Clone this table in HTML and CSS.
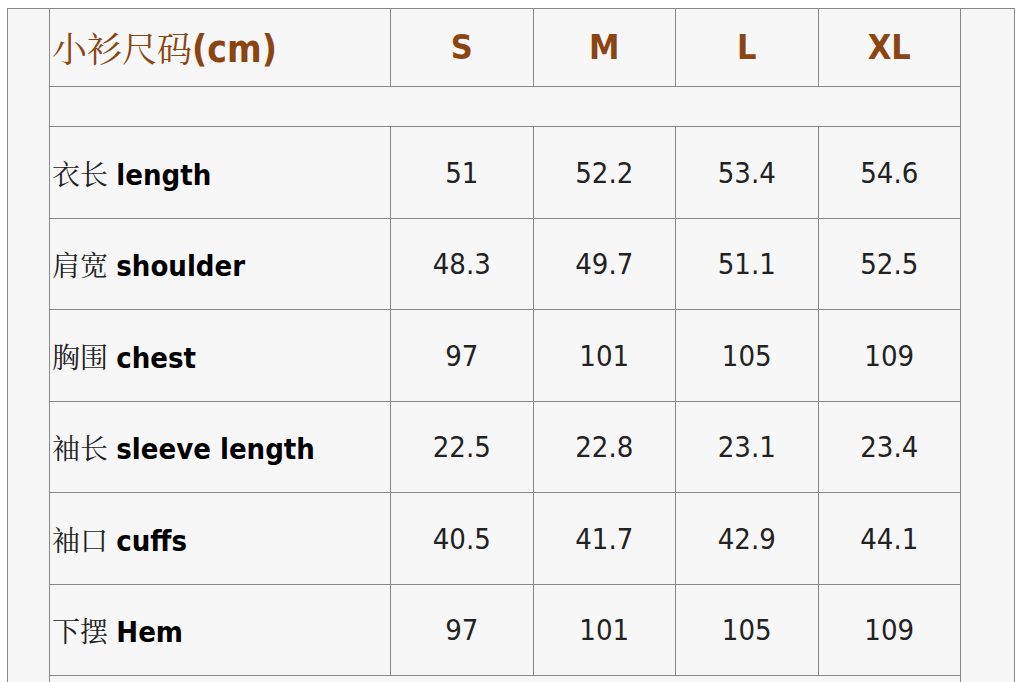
FILE: index.html
```html
<!DOCTYPE html>
<html lang="zh">
<head>
<meta charset="utf-8">
<title>小衫尺码</title>
<link rel="stylesheet" href="styles.css">
</head>
<body>
<div class="panel">
  <table class="size-table">
    <tr class="head-row">
      <th class="label"><span class="zh">小衫尺码</span><span class="en">(cm)</span></th>
      <th>S</th>
      <th>M</th>
      <th>L</th>
      <th>XL</th>
    </tr>
    <tr class="spacer"><td colspan="5"></td></tr>
    <tr class="data-row">
      <td class="label"><span class="zh">衣长</span> <b>length</b></td>
      <td>51</td><td>52.2</td><td>53.4</td><td>54.6</td>
    </tr>
    <tr class="data-row alt">
      <td class="label"><span class="zh">肩宽</span> <b>shoulder</b></td>
      <td>48.3</td><td>49.7</td><td>51.1</td><td>52.5</td>
    </tr>
    <tr class="data-row">
      <td class="label"><span class="zh">胸围</span> <b>chest</b></td>
      <td>97</td><td>101</td><td>105</td><td>109</td>
    </tr>
    <tr class="data-row alt">
      <td class="label"><span class="zh">袖长</span> <b>sleeve length</b></td>
      <td>22.5</td><td>22.8</td><td>23.1</td><td>23.4</td>
    </tr>
    <tr class="data-row">
      <td class="label"><span class="zh">袖口</span> <b>cuffs</b></td>
      <td>40.5</td><td>41.7</td><td>42.9</td><td>44.1</td>
    </tr>
    <tr class="data-row alt">
      <td class="label"><span class="zh">下摆</span> <b>Hem</b></td>
      <td>97</td><td>101</td><td>105</td><td>109</td>
    </tr>
    <tr class="spacer"><td colspan="5"></td></tr>
  </table>
</div>
</body>
</html>
```
FILE: styles.css
```css
html, body {
  margin: 0;
  padding: 0;
  background: #ffffff;
  overflow: hidden;
}

.panel {
  box-sizing: border-box;
  margin: 8px 0 0 7px;
  width: 1008px;
  height: 674px;
  overflow: hidden;
  border: 1px solid #888888;
  border-bottom: 0;
  background: #f7f7f7;
  padding-left: 41px;
}

.size-table {
  border-collapse: collapse;
  width: 912px;
  table-layout: fixed;
  font-family: "DejaVu Sans", Verdana, sans-serif;
  font-stretch: condensed;
  color: #222222;
}

.size-table th,
.size-table td {
  border: 1px solid #888888;
  padding: 0;
  text-align: center;
  vertical-align: middle;
}

.size-table th.label,
.size-table td.label {
  width: 338px;
  text-align: left;
  padding-left: 2px;
}

.head-row th {
  border-top: 0;
  height: 75px;
  font-size: 34px;
  font-weight: bold;
  color: #8b4513;
  padding-bottom: 2px;
}

.head-row .zh {
  font-family: "Noto Serif CJK SC", "Noto Sans CJK SC", serif;
  font-weight: normal;
  font-size: 35px;
}

.head-row .en {
  font-size: 37px;
}

.spacer td {
  height: 39px;
}

.data-row td {
  height: 91px;
  font-size: 29px;
}

.data-row.alt td {
  height: 90px;
}

.data-row .zh {
  font-family: "Noto Serif CJK SC", "Noto Sans CJK SC", serif;
  font-size: 28px;
  color: #222222;
}

.data-row b {
  color: #000000;
  font-weight: bold;
}
```
